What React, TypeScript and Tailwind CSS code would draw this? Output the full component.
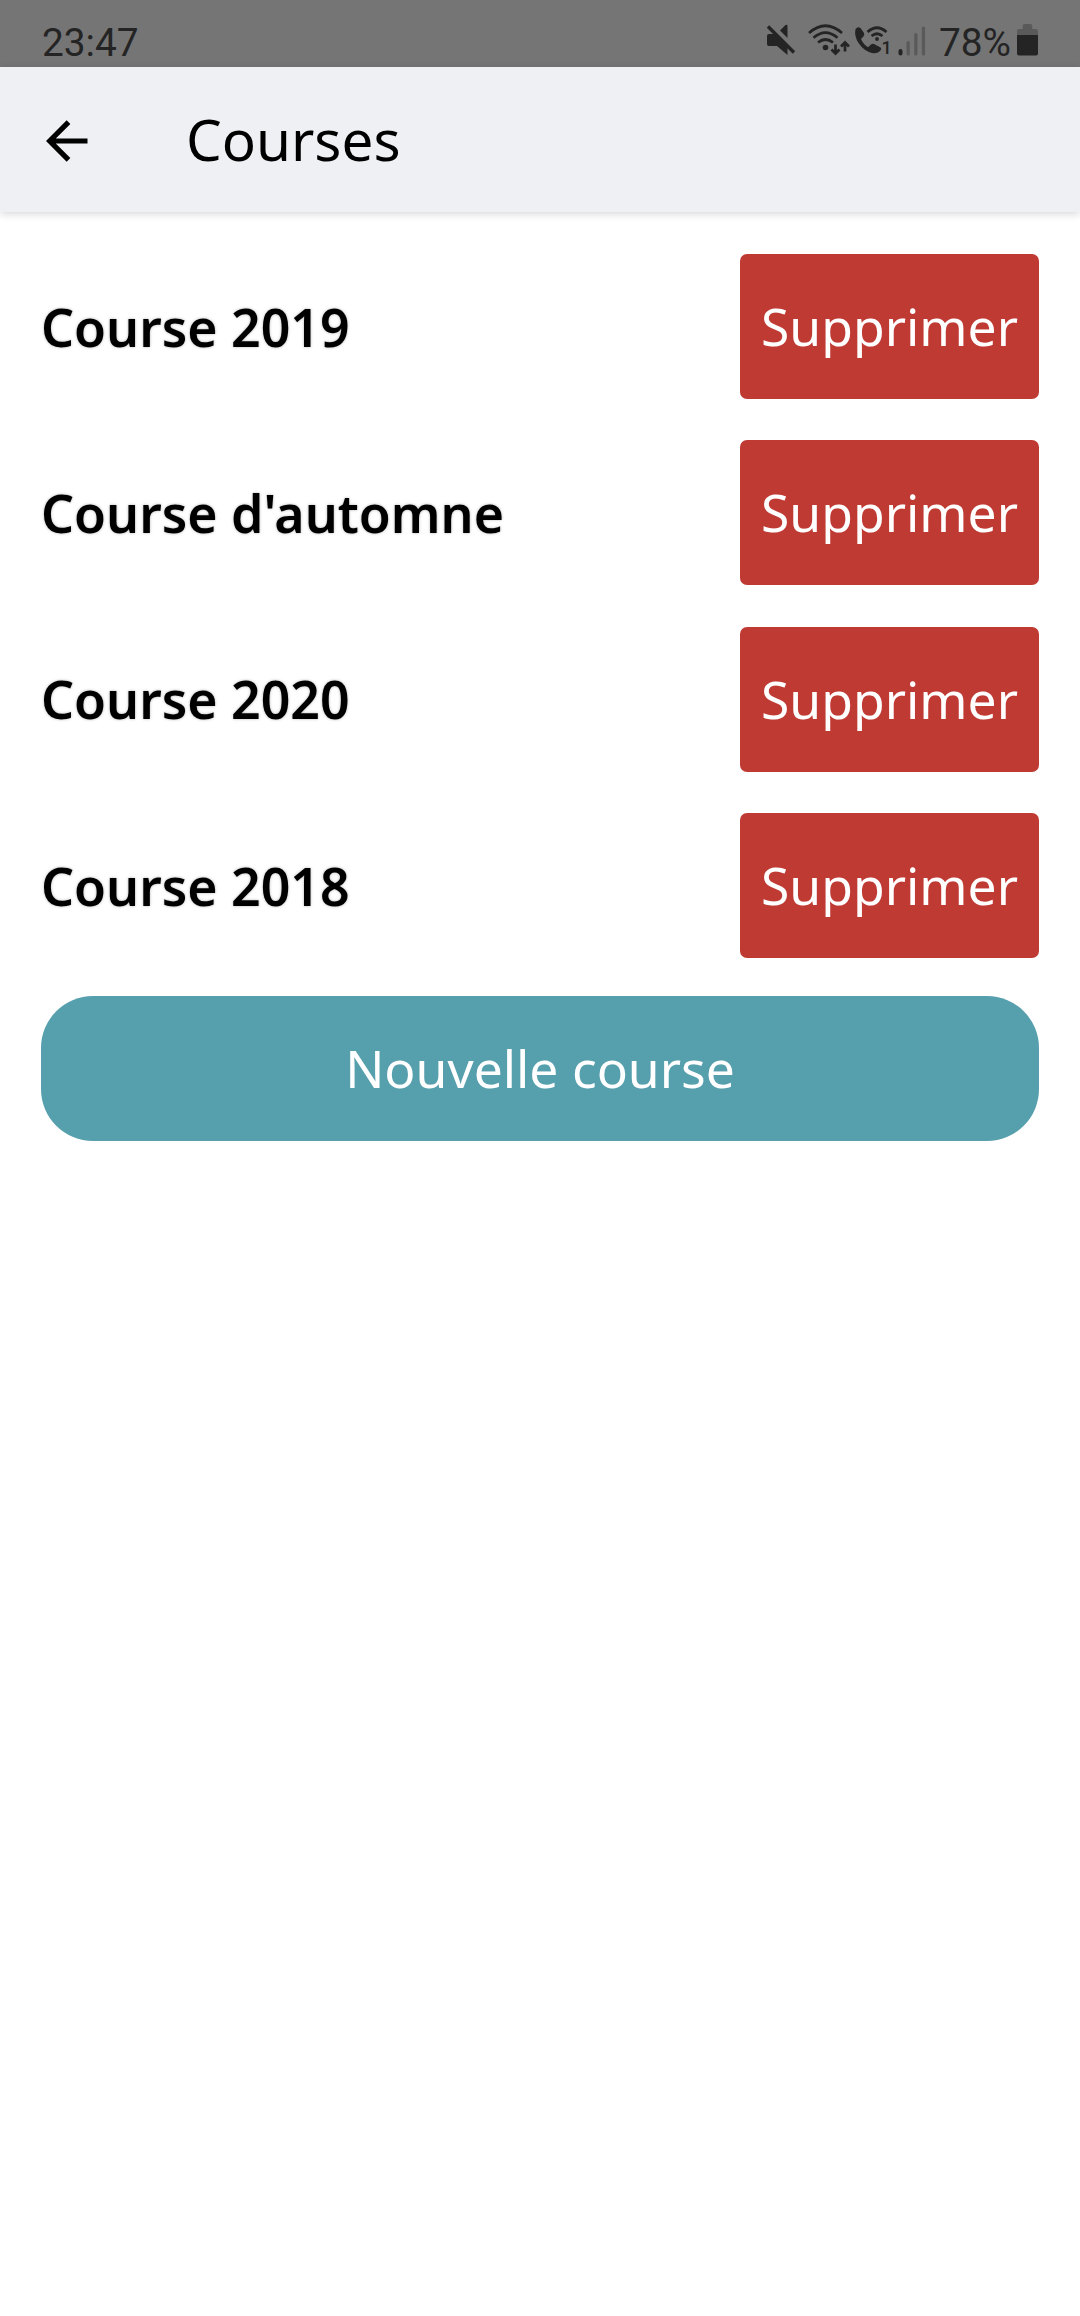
const courses = ["Course 2019", "Course d'automne", "Course 2020", "Course 2018"];

function StatusIcons() {
  return (
    <svg className="h-[67px] w-[168px] shrink-0" viewBox="762 0 168 67" fill="none">
      <g fill="#242424">
        <path d="M769 34H775L787.500 46.500V55L777 46H769Q767 46 767 44V36Q767 34 769 34Z" />
        <path d="M780 30.500L785.500 25Q787.500 24 787.500 26V38Z" />
        <circle cx="825.500" cy="47.500" r="2.800" />
        <circle cx="877" cy="39" r="1.900" />
        <path d="M855.500 29Q858 26 860.500 28L864 33Q865 35 863 37L861 39Q863 44 868 47.200L871 44.500Q873 43 875 44.500L880.500 47.500Q882 49 880 51Q877 54 872 53Q864 51 858.500 43Q854 36 855.500 29Z" />
        <rect x="898.500" y="49" width="4" height="6.500" rx="2" />
      </g>
      <path d="M768 26.500L794 52.500" stroke="#242424" strokeWidth="3.300" />
      <g stroke="#242424" strokeWidth="2.700">
        <path d="M809 33Q825.500 18.500 842 33" />
        <path d="M813.500 37.800Q825.500 27.500 837.500 37.800" />
        <path d="M818 42.500Q825.500 36.500 833 42.500" />
        <path d="M867.500 32Q877 23.500 886.500 32" />
        <path d="M871.500 36Q877 31.500 882.500 36" />
        <path d="M835.500 44.500V53M831.500 49.500L835.500 53.500L839.500 49.500M845 51.500V43M841 46.500L845 42.500L849 46.500" />
      </g>
      <text x="881.500" y="53.500" fontSize="18" fontWeight="500" fill="#242424" className="font-['Roboto',sans-serif]">1</text>
      <g fill="#5a5a5a">
        <rect x="906.500" y="41" width="3.300" height="14.500" rx="1.600" />
        <rect x="914.200" y="33" width="3.300" height="22.500" rx="1.600" />
        <rect x="921.800" y="26.500" width="3.300" height="29" rx="1.600" />
      </g>
    </svg>
  );
}

function BatteryIcon() {
  return (
    <svg className="h-[67px] w-[21px] shrink-0" viewBox="1017 0 21 67">
      <path d="M1022.700 26Q1022.700 24 1024.500 24H1030.500Q1032.300 24 1032.300 26V29H1036Q1038 29 1038 31V35H1017V31Q1017 29 1019 29H1022.700Z" fill="#5a5a5a" />
      <path d="M1017 35H1038V53.500Q1038 55.500 1036 55.500H1019Q1017 55.500 1017 53.500Z" fill="#242424" />
    </svg>
  );
}

function StatusBar() {
  return (
    <div className="flex h-[67px] items-start bg-[#757575] pl-[42px] font-['Roboto',sans-serif] text-[38.800px] text-[#242424]">
      <span className="pt-5 leading-[46px]">23:47</span>
      <div className="mr-[42px] ml-auto flex">
        <StatusIcons />
        <span className="w-[79px] pt-5 pl-[9px] leading-[46px] whitespace-nowrap">78%</span>
        <span className="w-2" />
        <BatteryIcon />
      </div>
    </div>
  );
}

export default function App() {
  return (
    <div className="min-h-[2316px] w-[1080px] bg-white font-['Noto_Sans',sans-serif]">
      <StatusBar />
      <header className="flex h-[145px] items-center bg-[#eff0f4] pl-[46px] shadow-[0_2px_8px_rgba(0,0,0,0.16)]">
        <svg className="mt-[3px] h-[42px] w-[42px]" viewBox="0 0 42 42" fill="none" stroke="#000" strokeWidth="5.200">
          <path d="M41.500 21H4M22.500 2.200L3.700 21L22.500 39.800" />
        </svg>
        <h1 className="-mt-px ml-[98px] text-[56.600px] leading-[78px] text-black">Courses</h1>
      </header>
      <main className="px-[41px] pt-[42px]">
        <ul className="flex flex-col gap-[41.400px]">
          {courses.map((course) => (
            <li key={course} className="flex h-[145px] items-center justify-between">
              <span className="text-[51.850px] leading-[72px] font-semibold text-black [text-shadow:0_0_3px_rgba(0,0,0,0.3)]">{course}</span>
              <button className="h-[145px] w-[299px] rounded-[7px] bg-[#c03a34] text-[51.600px] text-white">Supprimer</button>
            </li>
          ))}
        </ul>
        <button className="mt-[38px] h-[145px] w-full rounded-[52px] bg-[#569fad] text-[51.600px] text-white">Nouvelle course</button>
      </main>
    </div>
  );
}
